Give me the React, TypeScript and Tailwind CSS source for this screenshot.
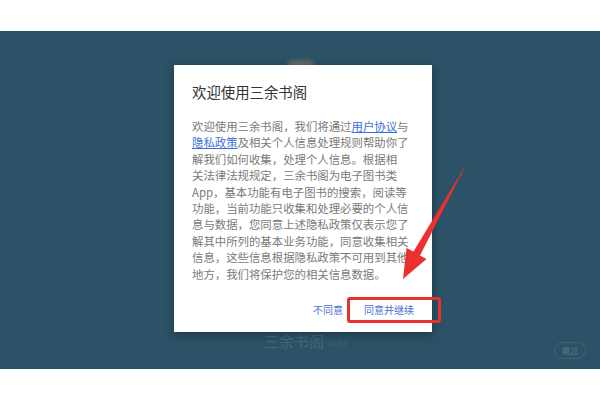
import React from "react";

const lines: React.ReactNode[] = [
  <>欢迎使用三余书阁，我们将通过<a className="text-[#3b6fe0] underline">用户协议</a>与</>,
  <><a className="text-[#3b6fe0] underline">隐私政策</a>及相关个人信息处理规则帮助你了</>,
  <>解我们如何收集，处理个人信息。根据相</>,
  <>关法律法规规定，三余书阁为电子图书类</>,
  <>App，基本功能有电子图书的搜索，阅读等</>,
  <>功能，当前功能只收集和处理必要的个人信</>,
  <>息与数据，您同意上述隐私政策仅表示您了</>,
  <>解其中所列的基本业务功能，同意收集相关</>,
  <>信息，这些信息根据隐私政策不可用到其他</>,
  <>地方，我们将保护您的相关信息数据。</>,
];

export default function App() {
  return (
    <div
      className="relative w-[600px] h-[400px] bg-white flex flex-col"
      style={{ fontFamily: '"Noto Sans CJK SC", "Noto Sans", sans-serif' }}
    >
      <div className="h-[31px]" />
      <div className="relative h-[338px] bg-[#2b5266] overflow-hidden">
        {/* background content */}
        <div className="absolute left-[288px] top-[29px] w-[26px] h-[10px] rounded-full bg-[#a08b78] opacity-50 blur-[2px]" />
        <div className="absolute left-[264px] top-[302px] flex items-end gap-1 text-[#47677a]">
          <span className="text-[15px] leading-none">三余书阁</span>
          <span className="text-[7px] leading-none mb-[1px]">v2.0.0</span>
        </div>
        <div className="absolute right-[14px] top-[311px] w-[32px] h-[17px] rounded-full border border-[#3f6477] flex items-center justify-center text-[8px] text-[#5d7d8e]">
          跳过
        </div>

        {/* dialog */}
        <div className="absolute left-[174px] top-[34px] w-[258px] h-[267px] bg-white shadow-[0_2px_10px_rgba(0,0,0,0.35)] flex flex-col">
          <div className="pl-[18px] pt-[17px] text-[14.4px] leading-[20px] text-[#333]">欢迎使用三余书阁</div>
          <div className="pl-[18px] pt-[16px] text-[11.4px] leading-[16.4px] text-[#7a7a7a] whitespace-nowrap">
            {lines.map((l, i) => (
              <div key={i}>{l}</div>
            ))}
          </div>
          <div className="flex-1" />
          <div className="flex items-center justify-end gap-[21px] pr-[18px] pb-[15px] text-[10px] text-[#4a73d6]">
            <span>不同意</span>
            <span>同意并继续</span>
          </div>
        </div>

        {/* annotation box */}
        <div className="absolute left-[347px] top-[266px] w-[94px] h-[26px] border-[3px] border-[#e8302f] rounded-[3px]" />
      </div>
      <div className="flex-1" />

      {/* arrow annotation */}
      <svg className="absolute left-0 top-0 pointer-events-none" width="600" height="400">
        <polygon
          points="467,163 420,255.5 426.5,259 403,279 406.5,248 413.5,251.5"
          fill="#ec2f2f"
        />
      </svg>
    </div>
  );
}
